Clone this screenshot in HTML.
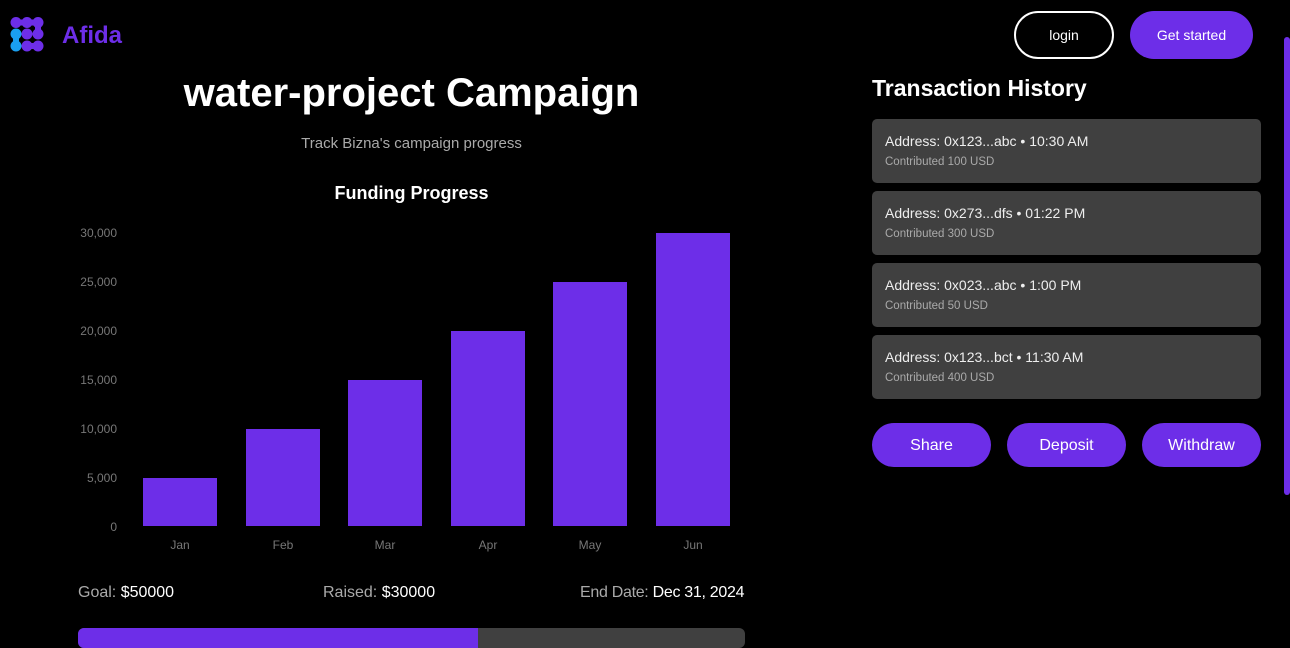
<!DOCTYPE html>
<html><head><meta charset="utf-8"><style>
*{margin:0;padding:0;box-sizing:border-box}
body{width:1290px;height:637px;background:#000;color:#fff;font-family:"Liberation Sans",sans-serif;position:relative;overflow:hidden}
.a{position:absolute}
.card{position:absolute;left:872px;width:389px;height:64px;background:#404040;border-radius:5px}
.card .t{position:absolute;left:13px;top:14px;font-size:14px;color:#eee}
.card .s{position:absolute;left:13px;top:37px;font-size:11.5px;color:#aaa}
.btn{position:absolute;top:423px;width:119px;height:44px;border-radius:22px;background:#6d2ee8;color:#fff;font-size:16px;text-align:center;line-height:45px}
.yl{position:absolute;right:1173px;font-size:12px;color:#777;text-align:right}
.xl{position:absolute;top:538px;font-size:12px;color:#777;width:74px;text-align:center}
.bar{position:absolute;background:#6d2ee8;width:74px;bottom:111px}
</style></head><body>
<svg class="a" style="left:0;top:0" width="60" height="60" viewBox="0 0 60 60">
<g fill="#6d2ee8">
<circle cx="16" cy="22.5" r="5.5"/><circle cx="27" cy="22.5" r="5.5"/><circle cx="38" cy="22.5" r="5.5"/>
<circle cx="27" cy="34" r="5.5"/><circle cx="38" cy="34" r="5.5"/>
<circle cx="27" cy="46" r="5.5"/><circle cx="38" cy="46" r="5.5"/>
</g>
<g stroke="#6d2ee8" stroke-width="6" fill="none"><path d="M16 22.5H38V34"/><path d="M27 46H38"/></g>
<circle cx="16" cy="34" r="5.5" fill="#1a9ff0"/><circle cx="16" cy="46" r="5.5" fill="#1a9ff0"/>
<path d="M16 34V46" stroke="#1a9ff0" stroke-width="6"/>
</svg>
<div class="a" style="left:62px;top:22px;font-size:24px;font-weight:bold;color:#6d2ee8">Afida</div>
<div class="a" style="left:1014px;top:11px;width:100px;height:48px;border:2px solid #fff;border-radius:24px;text-align:center;line-height:44px;font-size:14px">login</div>
<div class="a" style="left:1130px;top:11px;width:123px;height:48px;background:#6d2ee8;border-radius:24px;text-align:center;line-height:48px;font-size:14px">Get started</div>
<div class="a" style="left:1284px;top:37px;width:6px;height:458px;background:#6d2ee8;border-radius:3px"></div>
<div class="a" style="left:78px;width:667px;top:71px;text-align:center;font-size:40px;font-weight:bold">water-project Campaign</div>
<div class="a" style="left:78px;width:667px;top:135px;text-align:center;font-size:15px;color:#aaa">Track Bizna's campaign progress</div>
<div class="a" style="left:78px;width:667px;top:183px;text-align:center;font-size:18px;font-weight:bold">Funding Progress</div>
<div class="yl" style="top:226px">30,000</div>
<div class="yl" style="top:275px">25,000</div>
<div class="yl" style="top:324px">20,000</div>
<div class="yl" style="top:373px">15,000</div>
<div class="yl" style="top:422px">10,000</div>
<div class="yl" style="top:471px">5,000</div>
<div class="yl" style="top:520px">0</div>
<div class="bar" style="left:143px;height:48px"></div>
<div class="bar" style="left:246px;height:97px"></div>
<div class="bar" style="left:348px;height:146px"></div>
<div class="bar" style="left:451px;height:195px"></div>
<div class="bar" style="left:553px;height:244px"></div>
<div class="bar" style="left:656px;height:293px"></div>
<div class="xl" style="left:143px">Jan</div>
<div class="xl" style="left:246px">Feb</div>
<div class="xl" style="left:348px">Mar</div>
<div class="xl" style="left:451px">Apr</div>
<div class="xl" style="left:553px">May</div>
<div class="xl" style="left:656px">Jun</div>
<div class="a" style="left:78px;top:584px;font-size:16px;color:#aaa">Goal: <span style="color:#fff">$50000</span></div>
<div class="a" style="left:323px;top:584px;font-size:16px;color:#aaa">Raised: <span style="color:#fff">$30000</span></div>
<div class="a" style="left:580px;top:584px;font-size:16px;color:#aaa;letter-spacing:-0.3px">End Date: <span style="color:#fff">Dec 31, 2024</span></div>
<div class="a" style="left:78px;top:628px;width:667px;height:20px;background:#404040;border-radius:6px;overflow:hidden"><div style="width:400px;height:100%;background:#6d2ee8"></div></div>
<div class="a" style="left:872px;top:75px;font-size:23px;font-weight:bold">Transaction History</div>
<div class="card" style="top:119px"><div class="t">Address: 0x123...abc • 10:30 AM</div><div class="s">Contributed 100 USD</div></div>
<div class="card" style="top:191px"><div class="t">Address: 0x273...dfs • 01:22 PM</div><div class="s">Contributed 300 USD</div></div>
<div class="card" style="top:263px"><div class="t">Address: 0x023...abc • 1:00 PM</div><div class="s">Contributed 50 USD</div></div>
<div class="card" style="top:335px"><div class="t">Address: 0x123...bct • 11:30 AM</div><div class="s">Contributed 400 USD</div></div>
<div class="btn" style="left:872px">Share</div>
<div class="btn" style="left:1007px">Deposit</div>
<div class="btn" style="left:1142px">Withdraw</div>
</body></html>
